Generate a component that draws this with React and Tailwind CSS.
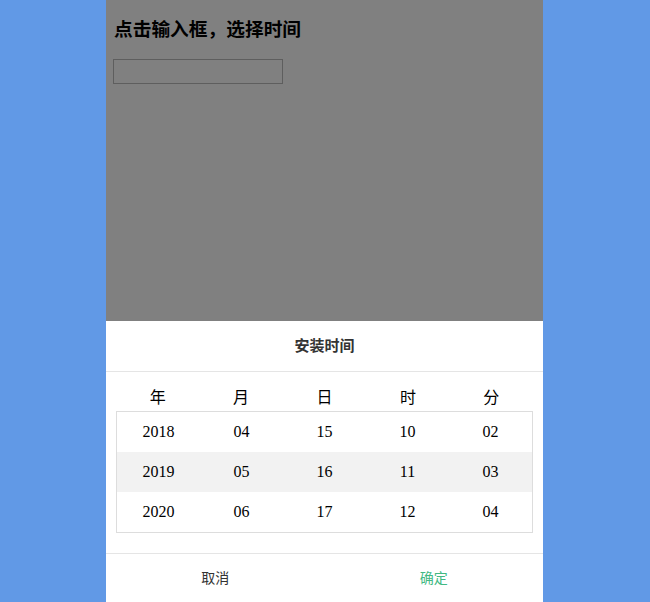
import React from 'react'

const cols = ['年', '月', '日', '时', '分']
const rows = [
  ['2018', '04', '15', '10', '02'],
  ['2019', '05', '16', '11', '03'],
  ['2020', '06', '17', '12', '04'],
]

const App = () => {
  return (
    <div className="flex h-[602px] bg-[#6199e6] pl-[106px] font-['Liberation_Serif','Noto_Sans_CJK_SC',serif]">
      <div className="relative w-[437px] h-full bg-[#808080] overflow-hidden">
        <div className="px-2 pt-[18px]">
          <h1 className="text-[18.72px] leading-[24px] font-bold text-black">点击输入框，选择时间</h1>
          <input className="mt-[17px] -ml-px w-[170px] h-[25px] border border-[#5e5e5e] bg-transparent outline-none" />
        </div>

        <div className="absolute left-0 right-0 bottom-0 h-[281px] bg-white flex flex-col">
          <div className="h-[51px] flex items-center justify-center border-b border-[#e5e5e5] text-[15px] font-bold text-[#333]">
            安装时间
          </div>
          <div className="px-[10px] pt-[14px]">
            <div className="grid grid-cols-5 text-center text-[16px] leading-[24px] text-black pb-px">
              {cols.map((c) => (
                <span key={c}>{c}</span>
              ))}
            </div>
            <div className="border border-[#dddddd]">
              {rows.map((r, i) => (
                <div
                  key={i}
                  className={'grid grid-cols-5 h-[40px] items-center text-center text-[16px] text-black ' + (i === 1 ? 'bg-[#f2f2f2]' : '')}
                >
                  {r.map((v, j) => (
                    <span key={j}>{v}</span>
                  ))}
                </div>
              ))}
            </div>
          </div>
          <div className="mt-auto h-[49px] border-t border-[#e5e5e5] grid grid-cols-2 text-[14px]">
            <button className="text-[#333]">取消</button>
            <button className="text-[#42b983]">确定</button>
          </div>
        </div>
      </div>
    </div>
  )
}

export default App
